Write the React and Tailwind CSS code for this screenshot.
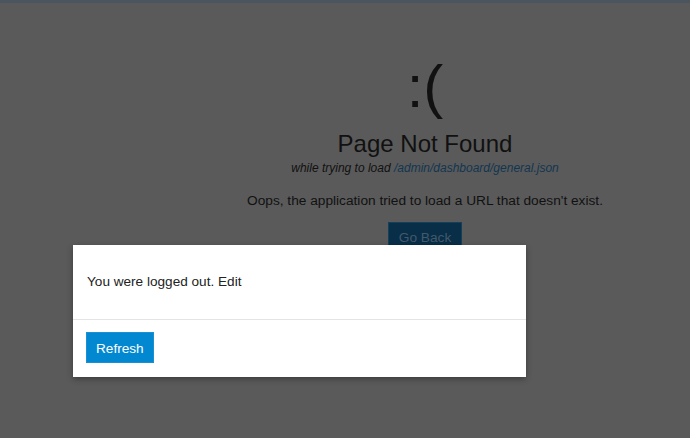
export default function App() {
  return (
    <div
      className="relative w-[690px] h-[438px] overflow-hidden bg-[#5a5a5a] text-[#111]"
      style={{ fontFamily: '"Liberation Sans", Arial, sans-serif' }}
    >
      {/* dimmed header strip */}
      <div className="h-[3px] bg-[#4a5560]" />

      {/* error page under the overlay */}
      <div className="flex">
        <div className="w-[160px] shrink-0" />
        <div className="flex-1 flex flex-col items-center pt-[48px]">
          <div className="text-[60px] leading-[72px] text-[#111]">:(</div>
          <h1 className="text-[24px] leading-[28px] mt-[7px] text-[#111]">Page Not Found</h1>
          <p className="text-[12px] italic leading-[16px] mt-[2px] text-[#111]">
            while trying to load <span className="text-[#123650]">/admin/dashboard/general.json</span>
          </p>
          <p className="text-[13.7px] leading-[18px] mt-[16px] text-[#111]">
            Oops, the application tried to load a URL that doesn't exist.
          </p>
          <button className="mt-[12px] h-[30px] px-[10px] pt-[2px] bg-[#082e48] border border-[#15405a] text-[13.7px] text-[#44596a]">
            Go Back
          </button>
        </div>
      </div>

      {/* session dialog */}
      <div className="absolute left-[73px] top-[245px] w-[453px] bg-white shadow-[0_2px_6px_rgba(0,0,0,0.35)]">
        <div className="h-[74px] flex items-center px-[14px] pt-[1px]">
          <span className="text-[13.6px] text-[#222]">You were logged out. Edit</span>
        </div>
        <div className="border-t border-[#e4e4e4] px-[13px] pt-[12px] pb-[14px]">
          <button className="h-[31px] px-[9px] pt-[3px] bg-[#0288d1] border border-[#1a90d4] text-white text-[13.6px]">
            Refresh
          </button>
        </div>
      </div>
    </div>
  );
}
